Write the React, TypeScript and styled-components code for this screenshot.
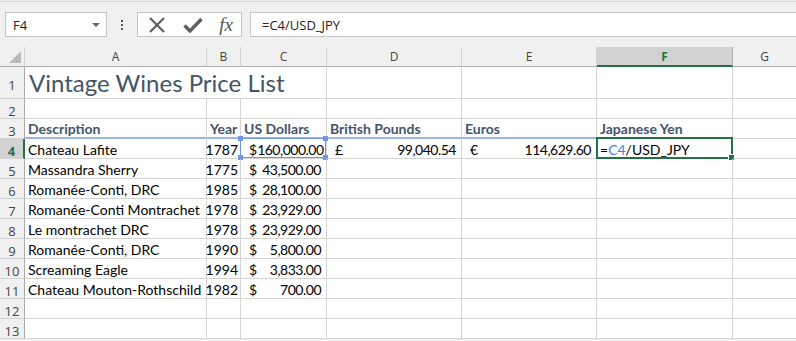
import React from 'react';
import styled, {createGlobalStyle, css} from 'styled-components';

const GlobalStyle = createGlobalStyle`
    html, body {
        margin: 0;
        padding: 0;
        background: #f0f0f0;
    }
    body {
        font-family: Lato, "Liberation Sans", sans-serif;
    }
`

const GRID = '#d4d4d4'
const GREEN = '#217346'
const HEADING = '#44546a'
const REF_BLUE = '#6f96e6'

const columns = ['A', 'B', 'C', 'D', 'E', 'F', 'G']

type Cell = {
    text?: string
    kind?: 'text' | 'year' | 'money' | 'heading' | 'formula'
    symbol?: string
}

const rows: Cell[][] = [
    [],
    [],
    [
        {text: 'Description', kind: 'heading'},
        {text: 'Year', kind: 'heading'},
        {text: 'US Dollars', kind: 'heading'},
        {text: 'British Pounds', kind: 'heading'},
        {text: 'Euros', kind: 'heading'},
        {text: 'Japanese Yen', kind: 'heading'},
        {},
    ],
    [
        {text: 'Chateau Lafite'},
        {text: '1787', kind: 'year'},
        {text: '160,000.00', kind: 'money', symbol: '$'},
        {text: '99,040.54', kind: 'money', symbol: '£'},
        {text: '114,629.60', kind: 'money', symbol: '€'},
        {kind: 'formula'},
        {},
    ],
    ...([
        ['Massandra Sherry', '1775', '43,500.00'],
        ['Romanée-Conti, DRC', '1985', '28,100.00'],
        ['Romanée-Conti Montrachet', '1978', '23,929.00'],
        ['Le montrachet DRC', '1978', '23,929.00'],
        ['Romanée-Conti, DRC', '1990', '5,800.00'],
        ['Screaming Eagle', '1994', '3,833.00'],
        ['Chateau Mouton-Rothschild', '1982', '700.00'],
    ].map(([name, year, usd]) => [
        {text: name},
        {text: year, kind: 'year'},
        {text: usd, kind: 'money', symbol: '$'},
        {}, {}, {}, {},
    ] as Cell[])),
    [],
    [],
]

export default function App() {
    return <Window>
        <GlobalStyle/>
        <FormulaBar>
            <NameBox>
                <span>F4</span>
                <Caret/>
            </NameBox>
            <Kebab>
                <i/><i/><i/>
            </Kebab>
            <FxGroup>
                <svg width="18" height="18" viewBox="0 0 18 18">
                    <path d="M2 2 L16 16 M16 2 L2 16" stroke="#5f5f5f" strokeWidth="2.2" fill="none"/>
                </svg>
                <svg width="20" height="16" viewBox="0 0 20 16">
                    <path d="M1.5 8.5 L7 14 L18.5 2" stroke="#5f5f5f" strokeWidth="3.4" fill="none"/>
                </svg>
                <FxText>fx</FxText>
            </FxGroup>
            <FormulaInput>=C4/USD_JPY</FormulaInput>
        </FormulaBar>

        <Sheet>
            <Corner>
                <CornerTriangle/>
            </Corner>
            {columns.map(c => <ColHeader key={c} active={c === 'F'}>{c}</ColHeader>)}

            {Array.from({length: 13}, (_, r) => {
                const rowNo = r + 1
                const cells = rows[r]
                return <React.Fragment key={rowNo}>
                    <RowHeader active={rowNo === 4}>{rowNo}</RowHeader>
                    {rowNo === 1 ? <>
                        <TitleCell>Vintage Wines Price List</TitleCell>
                        {columns.slice(3).map(c => <GridCell key={c}/>)}
                    </> : columns.map((c, ci) => {
                        const cell = cells[ci] || {}
                        return <GridCell key={c} underline={rowNo === 3 && ci < 6} kind={cell.kind}>
                            {cell.kind === 'money' ? <>
                                <span>{cell.symbol}</span>
                                <Amount>{cell.text}</Amount>
                            </> : cell.kind === 'formula' ? <span>
                                =<RefText>C4</RefText>/USD_JPY
                            </span> : cell.text}
                            {rowNo === 4 && c === 'C' && <RefBox>
                                <Handle pos="tl"/><Handle pos="tr"/><Handle pos="bl"/><Handle pos="br"/>
                            </RefBox>}
                            {rowNo === 4 && c === 'F' && <Selection><FillHandle/></Selection>}
                        </GridCell>
                    })}
                </React.Fragment>
            })}
        </Sheet>
    </Window>
}

const Window = styled.div`
    width: 796px;
    height: 341px;
    overflow: hidden;
    background: #f0f0f0;
    padding-top: 1px;
    box-sizing: border-box;
`

const FormulaBar = styled.div`
    height: 46px;
    box-sizing: border-box;
    border-top: 1px solid #d6d6d6;
    padding-top: 10px;
    display: flex;
    align-items: flex-start;
    font-family: "Open Sans", "Liberation Sans", sans-serif;
    font-size: 13px;
    color: #222;
`

const NameBox = styled.div`
    margin-left: 5px;
    width: 102px;
    height: 25px;
    box-sizing: border-box;
    background: #fff;
    border: 1px solid #c6c6c6;
    display: flex;
    align-items: center;
    justify-content: space-between;
    padding: 0 6px 0 7px;
`

const Caret = styled.div`
    width: 0;
    height: 0;
    border-left: 4px solid transparent;
    border-right: 4px solid transparent;
    border-top: 4px solid #666;
`

const Kebab = styled.div`
    width: 30px;
    height: 25px;
    display: flex;
    flex-direction: column;
    align-items: center;
    justify-content: center;
    gap: 2px;

    i {
        width: 2px;
        height: 2px;
        background: #555;
    }
`

const FxGroup = styled.div`
    width: 105px;
    height: 25px;
    box-sizing: border-box;
    background: #fff;
    border: 1px solid #c6c6c6;
    display: flex;
    align-items: center;
    justify-content: space-between;
    padding: 0 8px 0 10px;
`

const FxText = styled.span`
    font-family: "Liberation Serif", "DejaVu Serif", serif;
    font-style: italic;
    font-size: 19px;
    color: #555;
    line-height: 1;
`

const FormulaInput = styled.div`
    margin-left: 8px;
    flex: 1;
    height: 25px;
    box-sizing: border-box;
    background: #fff;
    border: 1px solid #c6c6c6;
    border-right: none;
    display: flex;
    align-items: center;
    padding-left: 11px;
`

const Sheet = styled.div`
    display: grid;
    grid-template-columns: 25px 182px 34px 86px 135px 135px 136px 64px;
    grid-template-rows: 20px 32px repeat(12, 20px);
    background: #fff;
`

const headerBase = css`
    background: #f0f0f0;
    box-sizing: border-box;
    display: flex;
    align-items: center;
    justify-content: center;
    font-family: "Open Sans", "Liberation Sans", sans-serif;
    color: #444;
`

const Corner = styled.div`
    ${headerBase};
    position: relative;
    border-right: 1px solid #d4d4d4;
    border-bottom: 1px solid #ababab;
`

const CornerTriangle = styled.div`
    position: absolute;
    right: 3px;
    bottom: 3px;
    width: 0;
    height: 0;
    border-left: 12px solid transparent;
    border-bottom: 12px solid #b9b9b9;
`

const ColHeader = styled.div<{ active?: boolean }>`
    ${headerBase};
    font-size: 12px;
    border-right: 1px solid #d4d4d4;
    border-bottom: 1px solid #ababab;
    ${p => p.active && css`
        background: #d2d2d2;
        color: ${GREEN};
        font-weight: 700;
        border-bottom: 2px solid ${GREEN};
        border-right-color: #ababab;
    `}
`

const RowHeader = styled.div<{ active?: boolean }>`
    ${headerBase};
    font-size: 13px;
    border-right: 1px solid #ababab;
    border-bottom: 1px solid #d4d4d4;
    padding-top: 4px;
    ${p => p.active && css`
        background: #d2d2d2;
        color: ${GREEN};
        font-weight: 700;
        border-right: 2px solid ${GREEN};
    `}
`

const GridCell = styled.div<{ underline?: boolean, kind?: Cell['kind'] }>`
    position: relative;
    box-sizing: border-box;
    border-right: 1px solid ${GRID};
    border-bottom: ${p => p.underline ? `2px solid #9cb6e4` : `1px solid ${GRID}`};
    display: flex;
    align-items: flex-end;
    padding: 0 3px;
    font-size: 14px;
    line-height: 17px;
    color: #000;
    white-space: nowrap;
    ${p => p.kind === 'year' && css`justify-content: flex-end; padding-right: 2px;`}
    ${p => p.kind === 'money' && css`justify-content: space-between; padding: 0 5px 0 8px;`}
    ${p => p.kind === 'heading' && css`font-weight: 700; color: ${HEADING};`}
`

const Amount = styled.span`
    letter-spacing: -0.5px;
`

const TitleCell = styled.div`
    grid-column: span 3;
    box-sizing: border-box;
    border-right: 1px solid ${GRID};
    border-bottom: 1px solid ${GRID};
    display: flex;
    align-items: flex-end;
    padding: 0 4px 1px;
    font-size: 24px;
    font-weight: 400;
    color: ${HEADING};
    white-space: nowrap;
`

const RefText = styled.span`
    color: #4a7fe0;
`

const RefBox = styled.div`
    position: absolute;
    inset: -1px 0 0 -1px;
    border: 1px solid ${REF_BLUE};
    pointer-events: none;
`

const handlePos = {
    tl: css`top: -3px; left: -3px;`,
    tr: css`top: -3px; right: -3px;`,
    bl: css`bottom: -3px; left: -3px;`,
    br: css`bottom: -3px; right: -3px;`,
}

const Handle = styled.div<{ pos: keyof typeof handlePos }>`
    position: absolute;
    width: 5px;
    height: 5px;
    background: ${REF_BLUE};
    ${p => handlePos[p.pos]};
`

const Selection = styled.div`
    position: absolute;
    inset: -2px -1px -1px -1px;
    border: 2px solid ${GREEN};
    pointer-events: none;
`

const FillHandle = styled.div`
    position: absolute;
    right: -4px;
    bottom: -4px;
    width: 5px;
    height: 5px;
    background: ${GREEN};
    border: 1px solid #fff;
`
